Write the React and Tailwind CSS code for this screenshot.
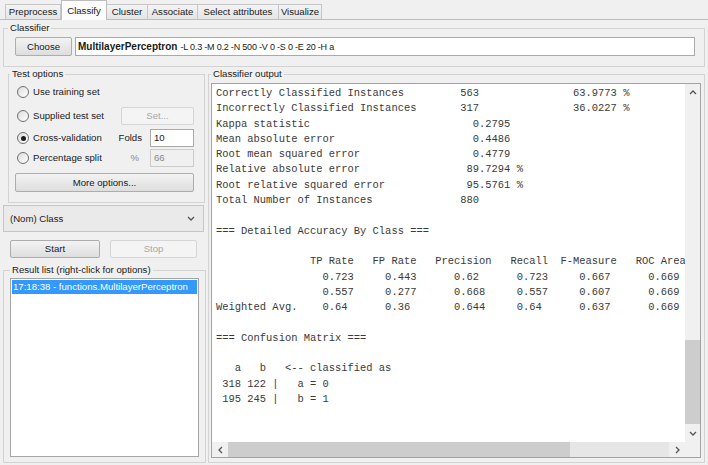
import React from "react";

// place each piece of text at a fixed monospace column
const at = (...parts) => {
  let s = "";
  for (const [col, text] of parts) s = s.padEnd(col) + text;
  return s;
};

const OUTPUT = [
  at([0, "Correctly Classified Instances"], [39, "563"], [57, "63.9773 %"]),
  at([0, "Incorrectly Classified Instances"], [39, "317"], [57, "36.0227 %"]),
  at([0, "Kappa statistic"], [41, "0.2795"]),
  at([0, "Mean absolute error"], [41, "0.4486"]),
  at([0, "Root mean squared error"], [41, "0.4779"]),
  at([0, "Relative absolute error"], [40, "89.7294 %"]),
  at([0, "Root relative squared error"], [40, "95.5761 %"]),
  at([0, "Total Number of Instances"], [39, "880"]),
  "",
  "=== Detailed Accuracy By Class ===",
  "",
  at([15, "TP Rate"], [25, "FP Rate"], [35, "Precision"], [47, "Recall"], [55, "F-Measure"], [67, "ROC Area"], [77, "Class"]),
  at([17, "0.723"], [27, "0.443"], [38, "0.62"], [48, "0.723"], [58, "0.667"], [69, "0.669"], [78, "0"]),
  at([17, "0.557"], [27, "0.277"], [38, "0.668"], [48, "0.557"], [58, "0.607"], [69, "0.669"], [78, "1"]),
  at([0, "Weighted Avg."], [17, "0.64"], [27, "0.36"], [38, "0.644"], [48, "0.64"], [58, "0.637"], [69, "0.669"]),
  "",
  "=== Confusion Matrix ===",
  "",
  "   a   b   <-- classified as",
  " 318 122 |   a = 0",
  " 195 245 |   b = 1",
].join("\n");

const TABS = [
  { label: "Preprocess", w: "w-[56px]" },
  { label: "Classify", w: "w-[46px]", active: true },
  { label: "Cluster", w: "w-[41px]" },
  { label: "Associate", w: "w-[50px]" },
  { label: "Select attributes", w: "w-[81px]" },
  { label: "Visualize", w: "w-[43px]" },
];

function Chevron({ dir = "down" }) {
  const pts = {
    down: "1,1 4,4 7,1",
    up: "1,4 4,1 7,4",
    left: "4,1 1,4 4,7",
    right: "1,1 4,4 1,7",
  }[dir];
  const side = dir === "left" || dir === "right";
  return (
    <svg
      width={side ? 5 : 8}
      height={side ? 8 : 5}
      viewBox={side ? "0 0 5 8" : "0 0 8 5"}
      fill="none"
      stroke="#555"
      strokeWidth="1.3"
    >
      <polyline points={pts} />
    </svg>
  );
}

function Button({ className = "", disabled, children }) {
  return (
    <div
      className={`flex items-center justify-center rounded-[2px] border ${
        disabled
          ? "border-[#d5d5d5] bg-[#f4f4f4] text-[#a8a8a8]"
          : "border-[#adadad] bg-gradient-to-b from-[#f3f3f3] to-[#dedede] text-[#1a1a1a]"
      } ${className}`}
    >
      {children}
    </div>
  );
}

function Radio({ checked, children }) {
  return (
    <div className="flex items-center gap-[4px] pl-[2px]">
      <span className="w-[12px] h-[12px] rounded-full border border-[#6f6f6f] bg-gradient-to-br from-[#dcdcdc] to-white flex items-center justify-center">
        {checked && <span className="w-[5px] h-[5px] rounded-full bg-[#1c1c1c]" />}
      </span>
      <span>{children}</span>
    </div>
  );
}

export default function App() {
  return (
    <div className="w-[708px] h-[465px] overflow-hidden bg-[#f0f0f0] flex flex-col font-['Liberation_Sans',Arial,sans-serif] text-[9.6px] leading-[12px] text-[#1a1a1a]">
      {/* tab strip */}
      <div className="h-[20px] shrink-0 flex items-end pl-[5px] border-b border-[#bdbdbd]">
        {TABS.map((t) =>
          t.active ? (
            <div
              key={t.label}
              className={`${t.w} h-[20px] -mb-px bg-[#fcfcfc] border border-b-0 border-[#bdbdbd] flex justify-center pt-[4px]`}
            >
              {t.label}
            </div>
          ) : (
            <div
              key={t.label}
              className={`${t.w} h-[15px] bg-gradient-to-b from-[#f4f4f4] to-[#e4e4e4] border-t border-r first:border-l border-[#c6c6c6] flex items-center justify-center`}
            >
              {t.label}
            </div>
          )
        )}
      </div>

      <div className="flex-1 min-h-0 flex flex-col px-[3px] pb-[2px]">
        {/* classifier */}
        <fieldset className="mt-[2px] shrink-0 min-w-0 border border-[#d3d3d3]">
          <legend className="ml-[4px] px-[2px]">Classifier</legend>
          <div className="flex gap-[3px] pl-[11px] pr-[9px] pt-[3px] pb-[10px]">
            <Button className="w-[57px] h-[19px]">Choose</Button>
            <div className="flex-1 h-[19px] bg-white border border-[#a9a9a9] flex items-center pl-[2px] whitespace-nowrap overflow-hidden">
              <span className="font-bold text-[10px]">MultilayerPerceptron</span>
              <span className="ml-[3px] text-[9px] tracking-[-0.2px]">-L 0.3 -M 0.2 -N 500 -V 0 -S 0 -E 20 -H a</span>
            </div>
          </div>
        </fieldset>

        <div className="flex-1 min-h-0 flex gap-[2px]">
          {/* left column */}
          <div className="w-[203px] shrink-0 flex flex-col">
            <fieldset className="mt-[1px] ml-[5px] w-[197px] min-w-0 border border-[#d3d3d3]">
              <legend className="ml-[1px] px-[2px]">Test options</legend>
              <div className="flex flex-col pl-[6px] pr-[10px] pt-[3px] pb-[10px]">
                <div className="h-[18px] flex items-center">
                  <Radio>Use training set</Radio>
                </div>
                <div className="mt-[6px] h-[18px] flex items-center">
                  <Radio>Supplied test set</Radio>
                  <Button disabled className="ml-auto w-[73px] h-[18px]">
                    Set...
                  </Button>
                </div>
                <div className="mt-[4px] h-[18px] flex items-center">
                  <Radio checked>Cross-validation</Radio>
                  <div className="ml-auto flex items-center gap-[8px]">
                    <span>Folds</span>
                    <div className="w-[44px] h-[18px] bg-white border border-[#a9a9a9] flex items-center pl-[3px]">
                      10
                    </div>
                  </div>
                </div>
                <div className="mt-[2px] h-[18px] flex items-center">
                  <Radio>Percentage split</Radio>
                  <div className="ml-auto flex items-center gap-[11px]">
                    <span className="text-[#8a8a8a]">%</span>
                    <div className="w-[44px] h-[18px] bg-[#f0f0f0] border border-[#cccccc] text-[#8a8a8a] flex items-center pl-[3px]">
                      66
                    </div>
                  </div>
                </div>
                <Button className="mt-[6px] h-[19px]">More options...</Button>
              </div>
            </fieldset>

            <div className="mt-[2px] w-[201px] h-[27px] shrink-0 border border-[#c6c6c6] bg-[#eaeaea] flex items-center justify-between pl-[6px] pr-[8px]">
              <span>(Nom) Class</span>
              <Chevron dir="down" />
            </div>

            <div className="mt-[8px] shrink-0 flex gap-[10px] pl-[7px]">
              <Button className="w-[90px] h-[18px]">Start</Button>
              <Button disabled className="w-[87px] h-[18px]">
                Stop
              </Button>
            </div>

            <fieldset className="mt-[6px] flex-1 min-h-0 min-w-0 border border-[#d3d3d3] flex flex-col">
              <legend className="ml-[6px] px-[2px]">Result list (right-click for options)</legend>
              <div className="flex-1 min-h-0 flex flex-col pl-[6px] pt-[2px] pb-[5px]">
                <div className="w-[189px] flex-1 bg-white border border-[#a5a5a5] p-px">
                  <div className="h-[14px] bg-[#3399ff] text-white flex items-center pl-[1px] whitespace-nowrap overflow-hidden">
                    17:18:38 - functions.MultilayerPerceptron
                  </div>
                </div>
              </div>
            </fieldset>
          </div>

          {/* classifier output */}
          <fieldset className="flex-1 mt-[1px] min-w-0 border border-[#d3d3d3] flex flex-col">
            <legend className="ml-[2px] px-[2px]">Classifier output</legend>
            <div className="flex-1 min-h-0 flex flex-col pl-[2px] pr-[3px] pt-[3px] pb-[4px]">
              <div className="flex-1 min-h-0 bg-white border border-[#a3a3a3] grid grid-cols-[1fr_15px] grid-rows-[1fr_15px]">
                <div className="overflow-hidden pl-[4px] pt-[2px]">
                  <pre className="font-['Liberation_Mono','Courier_New',monospace] text-[10.45px] leading-[15.3px] text-[#3a3a3a] whitespace-pre">
                    {OUTPUT}
                  </pre>
                </div>
                <div className="bg-[#f0f0f0] flex flex-col">
                  <div className="h-[17px] flex items-center justify-center">
                    <Chevron dir="up" />
                  </div>
                  <div className="flex-1" />
                  <div className="h-[84px] mb-px bg-[#cdcdcd]" />
                  <div className="h-[17px] flex items-center justify-center">
                    <Chevron dir="down" />
                  </div>
                </div>
                <div className="bg-[#f0f0f0] flex">
                  <div className="w-[16px] flex items-center justify-center">
                    <Chevron dir="left" />
                  </div>
                  <div className="w-[342px] bg-[#cdcdcd]" />
                  <div className="flex-1 bg-[#e6e6e6]" />
                  <div className="w-[16px] flex items-center justify-center">
                    <Chevron dir="right" />
                  </div>
                </div>
                <div className="bg-[#f0f0f0]" />
              </div>
            </div>
          </fieldset>
        </div>
      </div>
    </div>
  );
}
